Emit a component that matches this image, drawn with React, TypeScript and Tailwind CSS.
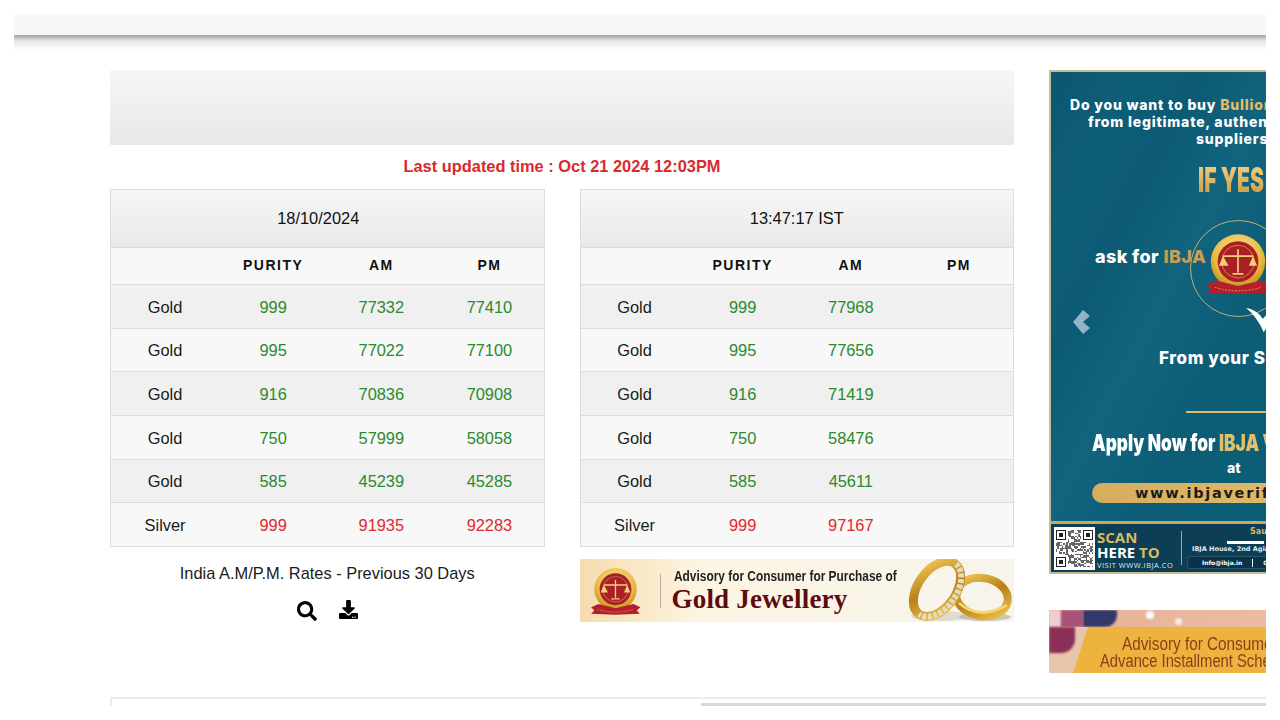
import React from "react";
import { FaSearch, FaDownload } from "react-icons/fa";

type Row = { n: string; p: string; a: string; b: string };
const left: Row[] = [
  { n: "Gold", p: "999", a: "77332", b: "77410" },
  { n: "Gold", p: "995", a: "77022", b: "77100" },
  { n: "Gold", p: "916", a: "70836", b: "70908" },
  { n: "Gold", p: "750", a: "57999", b: "58058" },
  { n: "Gold", p: "585", a: "45239", b: "45285" },
  { n: "Silver", p: "999", a: "91935", b: "92283" },
];
const right: Row[] = [
  { n: "Gold", p: "999", a: "77968", b: "" },
  { n: "Gold", p: "995", a: "77656", b: "" },
  { n: "Gold", p: "916", a: "71419", b: "" },
  { n: "Gold", p: "750", a: "58476", b: "" },
  { n: "Gold", p: "585", a: "45611", b: "" },
  { n: "Silver", p: "999", a: "97167", b: "" },
];

function RateTable({ title, rows, offset }: { title: string; rows: Row[]; offset?: boolean }) {
  return (
    <div className="border border-[#dcdcdc] h-[358px] flex flex-col">
      <div
        className={
          "h-[58px] flex items-center justify-center text-[16.4px] text-[#111] border-b border-[#dcdcdc] bg-gradient-to-b from-[#f6f6f6] to-[#e9e9e9] " +
          (offset ? "pr-[18px]" : "")
        }
      >
        {title}
      </div>
      <div className="h-[37px] grid grid-cols-4 items-center text-center text-[14px] font-bold tracking-[1.5px] text-[#111] bg-[#f8f8f8] border-b border-[#dcdcdc] pb-[1px]">
        <span />
        <span>PURITY</span>
        <span>AM</span>
        <span>PM</span>
      </div>
      {rows.map((r, i) => {
        const silver = r.n === "Silver";
        return (
          <div
            key={i}
            className={
              "flex-1 grid grid-cols-4 items-center text-center text-[16.4px] pt-[1px] " +
              (i % 2 === 0 ? "bg-[#f0f0f0] " : "bg-[#f8f8f8] ") +
              (i < rows.length - 1 ? "border-b border-[#dcdcdc] " : "") +
              (silver ? "text-[#dd2a2f]" : "text-[#2a8a2e]")
            }
          >
            <span className="text-[#1a1a1a]">{r.n}</span>
            <span>{r.p}</span>
            <span>{r.a}</span>
            <span>{r.b}</span>
          </div>
        );
      })}
    </div>
  );
}

function Seal({ id, className }: { id: string; className: string }) {
  return (
    <svg viewBox="0 0 100 100" className={className}>
      <defs>
        <radialGradient id={id} cx="50%" cy="35%" r="70%">
          <stop offset="0%" stopColor="#ffe9a0" />
          <stop offset="65%" stopColor="#e8b93f" />
          <stop offset="100%" stopColor="#b87f1c" />
        </radialGradient>
      </defs>
      <circle cx="50" cy="42" r="40" fill={`url(#${id})`} />
      <circle cx="50" cy="42" r="30" fill="#a81f25" />
      <circle cx="50" cy="42" r="24" fill="none" stroke="#e6b24a" strokeWidth="1" />
      <path d="M50 24V58M42 60H58M28 34H72" stroke="#f4cf78" strokeWidth="2.5" fill="none" />
      <path d="M28 34L22 48H36ZM72 34L66 48H78Z" fill="#f4cf78" />
      <path d="M4 76L18 70L50 78L84 70L97 76L90 82L96 88L50 90L4 88L10 82Z" fill="#b51f2a" />
      <path d="M16 80Q50 90 84 80" fill="none" stroke="#f0c76e" strokeWidth="1" strokeDasharray="3 2" />
    </svg>
  );
}

function Qr() {
  const cells: React.ReactNode[] = [];
  let s = 7;
  for (let y = 0; y < 25; y++) {
    for (let x = 0; x < 25; x++) {
      s = (s * 31 + x * 7 + y * 13) % 101;
      const corner = (x < 8 && y < 8) || (x > 16 && y < 8) || (x < 8 && y > 16);
      if (!corner && s % 2 === 0) cells.push(<rect key={`${x}-${y}`} x={x} y={y} width="1" height="1" fill="#666" />);
    }
  }
  const finder = (x: number, y: number) => (
    <g key={`f${x}${y}`}>
      <rect x={x} y={y} width="7" height="7" fill="#222" />
      <rect x={x + 1} y={y + 1} width="5" height="5" fill="#fff" />
      <rect x={x + 2} y={y + 2} width="3" height="3" fill="#222" />
    </g>
  );
  return (
    <svg viewBox="0 0 25 25" className="w-[37px] h-[39px]" shapeRendering="crispEdges">
      {cells}
      {finder(0, 0)}
      {finder(18, 0)}
      {finder(0, 18)}
    </svg>
  );
}

function Rings() {
  return (
    <svg viewBox="0 0 107 63" className="w-[107px] h-[63px] shrink-0 ml-auto">
      <defs>
        <linearGradient id="ringg" x1="0" y1="0" x2="1" y2="1">
          <stop offset="0%" stopColor="#f4cc5c" />
          <stop offset="50%" stopColor="#b8801a" />
          <stop offset="100%" stopColor="#f2c850" />
        </linearGradient>
      </defs>
      <ellipse cx="34" cy="57" rx="30" ry="5" fill="#cfc9ba" opacity="0.6" />
      <ellipse cx="78" cy="58" rx="26" ry="4" fill="#b8b2a2" opacity="0.7" />
      <ellipse cx="75" cy="38" rx="26" ry="19" fill="none" stroke="url(#ringg)" strokeWidth="8" transform="rotate(10 75 38)" />
      <path d="M52 44Q72 62 100 46" fill="none" stroke="#f5d66e" strokeWidth="3" />
      <ellipse cx="30" cy="30" rx="19" ry="31" fill="none" stroke="url(#ringg)" strokeWidth="9" transform="rotate(35 30 30)" />
      <path d="M49 5A19 31 35 0 1 12 55" fill="none" stroke="#e5dcc0" strokeWidth="6" strokeDasharray="4 1.5" />
    </svg>
  );
}

const wide = "font-['Inter',sans-serif] font-extrabold whitespace-nowrap";
const heavyNarrow = "font-['Inter',sans-serif] font-black inline-block origin-left whitespace-nowrap";
const narrow = "font-['Liberation_Sans',sans-serif] font-bold inline-block origin-left whitespace-nowrap";
const goldText = "bg-gradient-to-b from-[#f7dc8e] to-[#c98f35] bg-clip-text text-transparent";

function IbjaAd() {
  return (
    <div className="relative w-[420px] h-[504px] overflow-hidden border-t-2 border-l-2 border-b-2 border-[#c8bb92] bg-[linear-gradient(118deg,#0b5670_0%,#0f5e78_12%,#0c5a74_22%,#12647e_34%,#0c5c76_48%,#0c6076_75%,#0b566c_100%)] text-white flex flex-col items-start pt-[24px]">
      <div className={`ml-[19px] text-[14px] leading-[17px] tracking-[0.8px] ${wide}`}>
        Do you want to buy <span className="text-[#e3bd63]">Bullion</span>
      </div>
      <div className={`ml-[37px] text-[14px] leading-[17px] tracking-[0.8px] ${wide}`}>from legitimate, authentic</div>
      <div className={`ml-[145px] text-[14px] leading-[17px] tracking-[0.8px] ${wide}`}>suppliers?</div>
      <div className={`ml-[147px] mt-[11px] text-[34px] leading-[44px] scale-x-[0.62] ${heavyNarrow} ${goldText}`}>IF YES</div>
      <div className="ml-[44px] mt-[31px] flex items-start h-[68px]">
        <div className={`mt-[12px] text-[18px] leading-[24px] tracking-[0.4px] w-[109px] ${wide}`}>
          ask for <span className="text-[#c99f52]">IBJA</span>
        </div>
        <div className="relative w-[68px] h-[68px]">
          <div className="absolute left-[-14px] top-[-13px] w-[97px] h-[97px] rounded-full border border-[#c9ad66]" />
          <Seal id="seal-a" className="absolute inset-0 w-[68px] h-[68px]" />
          <svg viewBox="0 0 30 30" className="absolute left-[41px] top-[73px] w-[30px] h-[28px]">
            <path d="M0 2Q12 4 18 14L30 0V10L19 28Q12 12 0 2Z" fill="#fff" />
          </svg>
        </div>
      </div>
      <svg viewBox="0 0 17 24" className="absolute left-[22px] top-[238px] w-[17px] h-[24px]">
        <path d="M0 12L10 0L17 6L10 12L17 18L10 24Z" fill="#93b3c6" />
      </svg>
      <div className={`ml-[108px] mt-[45px] text-[17px] leading-[24px] tracking-[0.6px] ${wide}`}>From your Smartphone</div>
      <div className="ml-[135px] mt-[41px] w-[200px] h-[2px] bg-[#d8bc72]" />
      <div className={`ml-[41px] mt-[15px] text-[23px] leading-[30px] scale-x-[0.75] ${heavyNarrow}`}>
        Apply Now for <span className="text-[#e0c06c]">IBJA Verified</span>
      </div>
      <div className={`ml-[176px] mt-[1px] text-[14px] leading-[18px] ${wide}`}>at</div>
      <div className="ml-[41px] mt-[6px] w-[300px] h-[20px] shrink-0 rounded-full bg-gradient-to-r from-[#d6ad5c] to-[#e2c06c] pl-[43px] text-[14.5px] leading-[20px] tracking-[1.7px] font-bold text-[#1c1c1c] font-['DejaVu_Sans',sans-serif] whitespace-nowrap">
        www.ibjaverified.com
      </div>
      <div className="mt-[18px] w-full flex-1 border-t-[3px] border-[#c8a85e] bg-[#0c3e56] flex items-start pl-[3px] pt-[3px] whitespace-nowrap">
        <div className="w-[41px] h-[43px] bg-white flex items-center justify-center shrink-0">
          <Qr />
        </div>
        <div className="ml-[2px] w-[84px] shrink-0 flex flex-col pt-[3px] font-['Open_Sans',sans-serif]">
          <span className="text-[15px] leading-[15px] font-bold text-[#d8b864]">SCAN</span>
          <span className="text-[15px] leading-[15px] font-bold">
            HERE <span className="text-[#d8b864]">TO</span>
          </span>
          <span className="text-[7.5px] leading-[10px] tracking-[0.5px] text-[#dfe8ea]">VISIT WWW.IBJA.CO</span>
        </div>
        <div className="mt-[4px] w-px h-[34px] bg-[#b8a56c] shrink-0" />
        <div className="ml-[5px] flex flex-col items-start font-['DejaVu_Sans',sans-serif] font-bold">
          <span className="ml-[63px] text-[8px] leading-[10px] text-[#d8b864]">Saurabh</span>
          <span className="ml-[40px] mt-[4px] w-[37px] h-[3px] bg-white" />
          <span className="ml-[5px] mt-[1px] text-[6.5px] leading-[9px] text-[#e4eaec]">IBJA House, 2nd Agiary Lane</span>
          <span className="mt-[2px] w-[160px] h-[13px] rounded-[3px] border border-[#27566a] bg-[#0a3347] text-[6px] leading-[11px] pl-[14px]">
            Info@ibja.in<span className="inline-block w-px h-[8px] bg-white mx-[10px] align-middle" />022
          </span>
        </div>
      </div>
    </div>
  );
}

function InstallmentAd() {
  return (
    <div className="relative w-[420px] h-[63px] overflow-hidden bg-[#e9b99c] flex flex-col whitespace-nowrap">
      <div className="h-[17px] flex bg-gradient-to-r from-[#e6b196] to-[#f0c5ad] shrink-0">
        <span className="w-[12px] bg-[#f0cdd0] blur-[1px]" />
        <span className="w-[22px] bg-[#a8527c] blur-[1px]" />
        <span className="w-[34px] bg-[#33386a] rounded-br-[12px] blur-[1px]" />
        <span className="ml-[29px] mt-[1px] w-[8px] h-[8px] rounded-full bg-white blur-[1px]" />
        <span className="ml-[21px] mt-[8px] w-[7px] h-[7px] rounded-full bg-[#fbeee6] blur-[1px]" />
      </div>
      <div className="relative flex-1 bg-[#e8c4aa]">
        <div className="absolute left-0 top-0 w-[26px] h-[26px] rounded-br-[14px] bg-[#8c2f58] blur-[1px]" />
        <div className="absolute inset-0 bg-[#eeb33f] [clip-path:polygon(39px_0,100%_0,100%_100%,24px_100%)]" />
        <div className="relative flex flex-col items-start pt-[9px] font-['Liberation_Sans',sans-serif] text-[18px] leading-[17px] text-[#8b3e1d]">
          <span className="ml-[73px] inline-block origin-left scale-x-[0.85]">Advisory for Consumer</span>
          <span className="ml-[51px] inline-block origin-left scale-x-[0.82]">Advance Installment Scheme</span>
        </div>
      </div>
    </div>
  );
}

function GoldAd() {
  return (
    <div className="mt-[12px] h-[63px] overflow-hidden whitespace-nowrap flex items-start bg-gradient-to-r from-[#f6dcae] from-[0%] via-[#fdf5e3] via-[28%] to-[#f7f4ec]">
      <Seal id="seal-b" className="ml-[9px] mt-[8px] w-[53px] h-[53px] shrink-0" />
      <div className="ml-[18px] mt-[15px] w-px h-[34px] bg-[#b9b09a] shrink-0" />
      <div className="ml-[11px] flex flex-col items-start w-[228px] shrink-0">
        <div className={`ml-[2px] mt-[9px] text-[14.5px] leading-[17px] text-[#222] scale-x-[0.82] ${narrow}`}>Advisory for Consumer for Purchase of</div>
        <div className="mt-[-3px] text-[27px] leading-[34px] tracking-[0.2px] font-bold text-[#5c0c10] font-['Liberation_Serif',serif]">Gold Jewellery</div>
      </div>
      <Rings />
    </div>
  );
}

export default function App() {
  return (
    <div className="w-[1280px] h-[720px] bg-white p-[14px] font-['Liberation_Sans',Arial,sans-serif]">
      <div className="w-[1252px] h-[692px] overflow-hidden">
        <div className="h-[21px] bg-[#f5f7f8]" />
        <div className="h-[15px] bg-gradient-to-b from-[#a0a0a0] via-[#e6e6e6] via-[40%] to-white" />
        <div className="flex h-[647px] pt-[20px] pl-[96px]">
          <div className="w-[904px] shrink-0">
            <div className="h-[75px] bg-gradient-to-b from-[#f6f6f6] to-[#e8e8e8]" />
            <div className="mt-[9px] mb-[11px] h-[24px] leading-[24px] text-center text-[16.4px] font-bold text-[#d9292f]">
              Last updated time : Oct 21 2024 12:03PM
            </div>
            <div className="grid grid-cols-2 gap-x-[35px]">
              <div>
                <RateTable title="18/10/2024" rows={left} offset />
                <div className="mt-[14px] text-center text-[16.4px] leading-[24px] text-[#1a1a1a]">India A.M/P.M. Rates - Previous 30 Days</div>
                <div className="mt-[14px] flex justify-center items-center gap-[22px] text-black">
                  <FaSearch className="w-[20px] h-[20px] mt-[2px]" />
                  <FaDownload className="w-[19px] h-[19px] mt-[-2px]" />
                </div>
              </div>
              <div>
                <RateTable title="13:47:17 IST" rows={right} />
                <GoldAd />
              </div>
            </div>
          </div>
          <div className="ml-[35px] w-[420px] shrink-0">
            <IbjaAd />
            <div className="mt-[36px]">
              <InstallmentAd />
            </div>
          </div>
        </div>
        <div className="ml-[96px] h-[9px] border-t-2 border-l-2 border-[#ececec] pl-[589px] pt-[4px]">
          <div className="h-[3px] bg-[#d9d9d9]" />
        </div>
      </div>
    </div>
  );
}
